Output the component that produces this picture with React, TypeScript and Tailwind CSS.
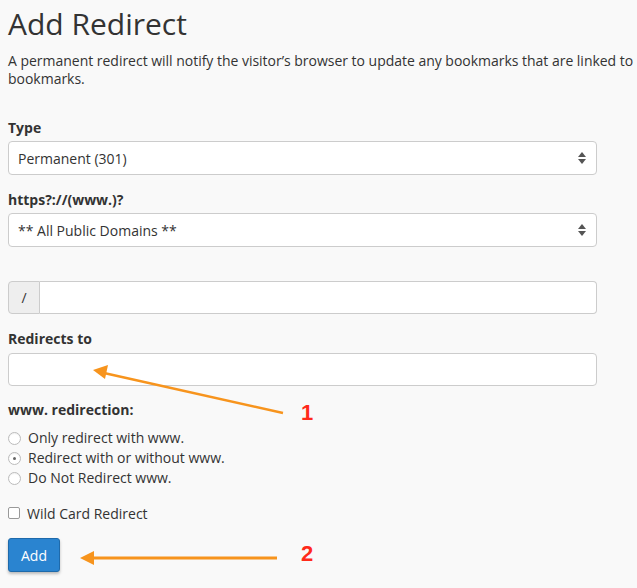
import React from 'react';

function SelectArrows() {
  return (
    <svg width="8" height="12" viewBox="0 0 8 12" className="absolute right-[10px] top-1/2 -translate-y-1/2">
      <path d="M4 0 L8 5 L0 5 Z" fill="#555" />
      <path d="M0 7 L8 7 L4 12 Z" fill="#555" />
    </svg>
  );
}

function FakeSelect({ value }: { value: string }) {
  return (
    <div className="relative h-[34px] w-[589px] rounded-[4px] border border-[#ccc] bg-white pl-[9px] flex items-center text-[14px] text-[#333]">
      {value}
      <SelectArrows />
    </div>
  );
}

function Radio({ checked, label }: { checked?: boolean; label: string }) {
  return (
    <label className="flex items-center gap-[7px] h-[20px]">
      <span className="w-[13px] h-[13px] rounded-full border border-[#bbb] bg-white flex items-center justify-center shadow-[inset_0_1px_1px_rgba(0,0,0,0.06)]">
        {checked && <span className="w-[3px] h-[3px] rounded-full bg-[#666]" />}
      </span>
      <span>{label}</span>
    </label>
  );
}

export default function App() {
  return (
    <div className="relative w-[637px] h-[588px] overflow-hidden bg-[#f9f9f9] text-[#333] font-['Open_Sans',sans-serif]">
      <div className="pl-[8px] pt-[6px]">
        <h1 className="text-[30px] leading-[36px] font-normal">Add Redirect</h1>
        <p className="mt-[10px] text-[14px] tracking-[-0.02px] leading-[18px] whitespace-nowrap">
          A permanent redirect will notify the visitor’s browser to update any bookmarks that are linked to
          <br />
          bookmarks.
        </p>

        <div className="mt-[30px] text-[14px] font-bold leading-[20px]">Type</div>
        <div className="mt-[3px]">
          <FakeSelect value="Permanent (301)" />
        </div>

        <div className="mt-[15px] text-[14px] font-bold leading-[20px]">https?://(www.)?</div>
        <div className="mt-[3px]">
          <FakeSelect value="** All Public Domains **" />
        </div>

        <div className="mt-[34px] flex w-[589px] h-[33px]">
          <div className="w-[32px] border border-[#ccc] rounded-l-[4px] bg-[#eee] flex items-center justify-center text-[14px]">/</div>
          <div className="flex-1 border border-l-0 border-[#ccc] rounded-r-[4px] bg-white" />
        </div>

        <div className="mt-[15px] text-[14px] font-bold leading-[20px]">Redirects to</div>
        <div className="mt-[4px] w-[589px] h-[33px] border border-[#ccc] rounded-[4px] bg-white" />

        <div className="mt-[14px] text-[14px] font-bold leading-[20px]">www. redirection:</div>
        <div className="mt-[8px] flex flex-col text-[14px] leading-[20px]">
          <Radio label="Only redirect with www." />
          <Radio checked label="Redirect with or without www." />
          <Radio label="Do Not Redirect www." />
        </div>

        <label className="mt-[15px] flex items-center gap-[7px] h-[20px] text-[14px]">
          <span className="w-[12px] h-[12px] rounded-[2px] border border-[#999] bg-white" />
          <span>Wild Card Redirect</span>
        </label>

        <button className="mt-[15px] h-[34px] px-[12px] rounded-[3px] bg-[#2a84d0] border border-[#1e6aab] text-white text-[14px] shadow-[0_2px_3px_rgba(0,0,0,0.25)]">
          Add
        </button>
      </div>

      {/* annotations */}
      <svg className="absolute left-0 top-0 pointer-events-none" width="637" height="588">
        <line x1="283" y1="413" x2="104" y2="373" stroke="#f7941d" strokeWidth="2.5" />
        <path d="M93 370 L108 365 L105 379 Z" fill="#f7941d" />
        <line x1="277" y1="558" x2="92" y2="558" stroke="#f7941d" strokeWidth="3" />
        <path d="M80 558 L94 551 L94 565 Z" fill="#f7941d" />
      </svg>
      <div className="absolute left-[301px] top-[396px] text-[22px] font-bold text-[#ff2a1a] font-['Liberation_Sans',sans-serif]">1</div>
      <div className="absolute left-[301px] top-[537px] text-[22px] font-bold text-[#ff2a1a] font-['Liberation_Sans',sans-serif]">2</div>
    </div>
  );
}
